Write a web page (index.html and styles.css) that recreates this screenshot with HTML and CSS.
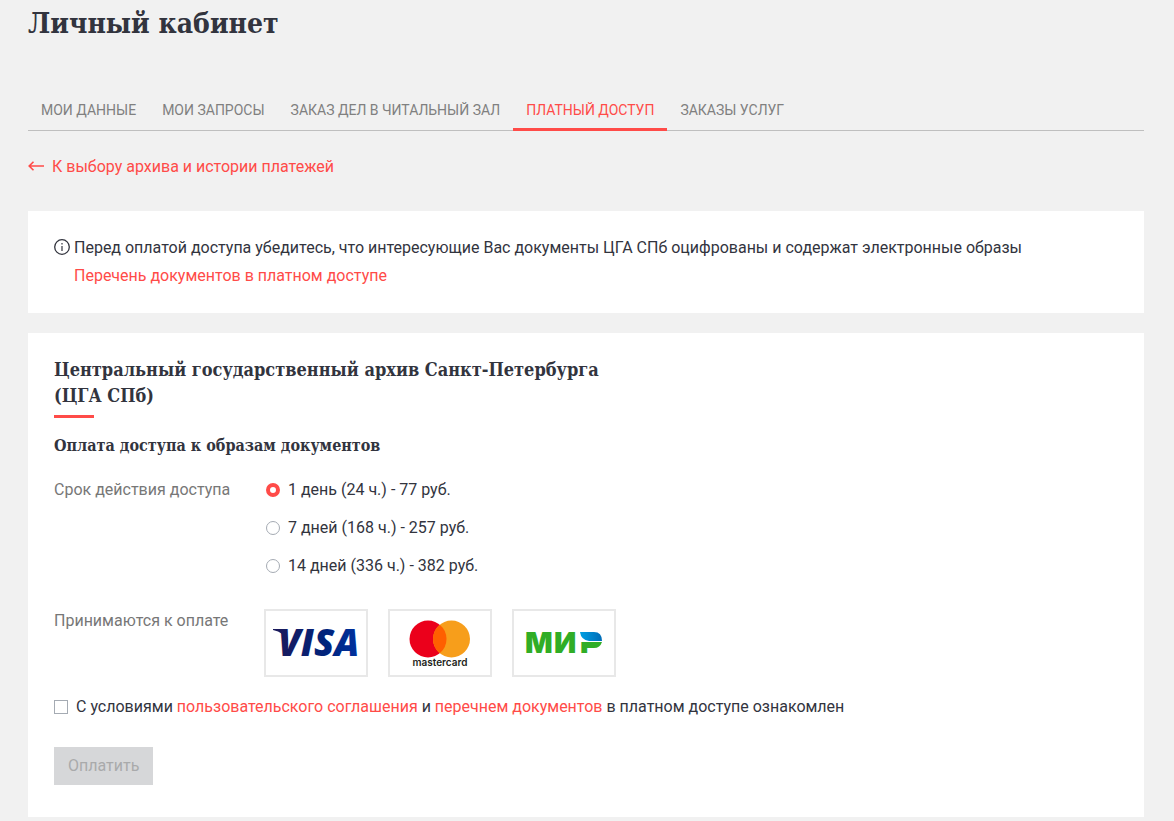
FILE: index.html
```html
<!DOCTYPE html>
<html lang="ru">
<head>
  <meta charset="UTF-8">
  <meta name="viewport" content="width=device-width, initial-scale=1.0">
  <title>Личный кабинет</title>
  <link rel="stylesheet" href="styles.css">
</head>
<body>

  <main class="page">
    <h1>Личный кабинет</h1>

    <nav class="tabs">
      <a href="#">Мои данные</a>
      <a href="#">Мои запросы</a>
      <a href="#">Заказ дел в читальный зал</a>
      <a href="#" class="active">Платный доступ</a>
      <a href="#">Заказы услуг</a>
    </nav>

    <a href="#" class="back-link">
      <svg width="16" height="12" viewBox="0 0 16 12" fill="none" stroke="currentColor" stroke-width="1.6" aria-hidden="true">
        <path d="M16 5H1M5.5 .7L1.2 5L5.5 9.3"/>
      </svg>
      К выбору архива и истории платежей
    </a>

    <section class="card notice">
      <svg class="info-icon" width="16" height="16" viewBox="0 0 16 16" fill="none" stroke="currentColor" aria-hidden="true">
        <circle cx="8" cy="8" r="7.3" stroke-width="1.3"/>
        <path d="M8 7V12M8 4V5.4" stroke-width="1.2"/>
      </svg>
      <div>
        <p>Перед оплатой доступа убедитесь, что интересующие Вас документы ЦГА СПб оцифрованы и содержат электронные образы</p>
        <a href="#">Перечень документов в платном доступе</a>
      </div>
    </section>

    <section class="card">
      <h2>Центральный государственный архив Санкт-Петербурга (ЦГА СПб)</h2>
      <h3>Оплата доступа к образам документов</h3>

      <form>
        <div class="form-row">
          <span class="form-label" id="periodLabel">Срок действия доступа</span>
          <div class="periods" role="radiogroup" aria-labelledby="periodLabel">
            <label><input type="radio" name="period" value="1" checked>1 день (24 ч.) - 77 руб.</label>
            <label><input type="radio" name="period" value="7">7 дней (168 ч.) - 257 руб.</label>
            <label><input type="radio" name="period" value="14">14 дней (336 ч.) - 382 руб.</label>
          </div>
        </div>

        <div class="form-row">
          <span class="form-label">Принимаются к оплате</span>
          <div class="payments">
            <div class="payment">
              <svg width="100" height="64" viewBox="0 0 100 64">
                <defs>
                  <linearGradient id="visaFill" x1="0" x2="1">
                    <stop offset="0" stop-color="#1a1a5c"/>
                    <stop offset="0.6" stop-color="#00247d"/>
                    <stop offset="1" stop-color="#0032a0"/>
                  </linearGradient>
                </defs>
                <path d="M7 18H17Q20 18 20.5 21L22 31Q18 21 7 19Z" fill="#1a1a5c"/>
                <text class="visa-text" x="12" y="45" fill="url(#visaFill)">VISA</text>
              </svg>
            </div>
            <div class="payment">
              <svg width="100" height="64" viewBox="0 0 100 64">
                <circle cx="38" cy="28" r="18.5" fill="#eb001b"/>
                <circle cx="61.5" cy="28" r="18.5" fill="#f79e1b"/>
                <path d="M49.75 13.7A18.5 18.5 0 0 1 49.75 42.3A18.5 18.5 0 0 1 49.75 13.7Z" fill="#ff5f00"/>
                <text class="mastercard-text" x="50" y="55" text-anchor="middle">mastercard</text>
              </svg>
            </div>
            <div class="payment">
              <svg width="100" height="64" viewBox="0 0 100 64">
                <defs>
                  <linearGradient id="mirFill" x1="0" x2="1">
                    <stop offset="0" stop-color="#009fe3"/>
                    <stop offset="1" stop-color="#006cb7"/>
                  </linearGradient>
                </defs>
                <text class="mir-text" x="11 40 66" y="42">МИР</text>
                <path d="M65 20H92V37H75V31H65Z" fill="#fff"/>
                <path d="M66 21H80Q88 21 88 30H75Q67 29 66 21Z" fill="url(#mirFill)"/>
                <path d="M68 31H88Q86 37 80 37H68Z" fill="#30ad26"/>
              </svg>
            </div>
          </div>
        </div>

        <div class="agreement">
          <input type="checkbox" id="agree">
          <label for="agree">С условиями <a href="#">пользовательского соглашения</a> и <a href="#">перечнем документов</a> в платном доступе ознакомлен</label>
        </div>

        <button type="submit" class="pay-button" disabled>Оплатить</button>
      </form>
    </section>
  </main>

</body>
</html>
```
FILE: styles.css
```css
* {
  box-sizing: border-box;
}

body {
  margin: 0;
  font-family: Roboto, sans-serif;
  font-size: 16px;
  line-height: 28px;
  color: #32343e;
  background-color: #f1f1f1;
}

h1, h2, h3 {
  font-family: "Roboto Slab", "DejaVu Serif Condensed", "DejaVu Serif", serif;
  font-weight: 600;
  margin: 0;
}

h1 {
  font-size: 28px;
  line-height: 48px;
}

p {
  margin: 0;
}

a {
  color: #ff4b48;
  text-decoration: none;
}

a:hover {
  text-decoration: underline;
}

.page {
  padding: 0 30px 4px 28px;
}

.tabs {
  display: flex;
  margin-top: 42px;
  border-bottom: 1px solid #bfbfbf;
}

.tabs a {
  padding: 6px 13px 4px;
  margin-bottom: -1px;
  border-bottom: 3px solid transparent;
  font-size: 14px;
  text-transform: uppercase;
  color: #808080;
}

.tabs a.active {
  color: #ff4b48;
  border-bottom-color: #ff4b48;
}

.back-link {
  display: inline-flex;
  align-items: center;
  gap: 8px;
  margin: 22px 0 30px;
}

.card {
  padding: 24px 26px 32px;
  background-color: #fff;
}

.notice {
  display: flex;
  gap: 4px;
  padding: 23px 26px;
  margin-bottom: 20px;
}

.info-icon {
  flex: none;
  margin-top: 5px;
}

h2 {
  max-width: 560px;
  font-size: 18px;
  line-height: 26px;
}

h2::after {
  content: "";
  display: block;
  width: 40px;
  height: 3px;
  margin-top: 6px;
  background-color: #ff4b48;
}

h3 {
  margin: 14px 0 16px;
  font-size: 16px;
}

.form-row {
  display: flex;
  margin-bottom: 16px;
}

.form-label {
  flex: none;
  width: 210px;
  color: #777;
}

.periods {
  display: flex;
  flex-direction: column;
  gap: 10px;
  margin-bottom: 11px;
}

.periods label {
  display: flex;
  align-items: center;
  gap: 8px;
  padding-left: 2px;
}

input[type="radio"], input[type="checkbox"] {
  appearance: none;
  flex: none;
  width: 14px;
  height: 14px;
  margin: 0;
  border: 1px solid #a5abb3;
  background-color: #fff;
}

input[type="radio"] {
  border-radius: 50%;
}

input[type="radio"]:checked {
  border: 4px solid #ff4b48;
}

input[type="checkbox"]:checked {
  background-color: #ff4b48;
}

.payments {
  display: flex;
  gap: 20px;
  padding-top: 2px;
}

.payment {
  border: 2px solid #e8e8e8;
}

.payment svg {
  display: block;
}

.visa-text {
  font: italic 800 37px "Open Sans", sans-serif;
}

.mastercard-text {
  font: 600 10px Inter, sans-serif;
  fill: #231f20;
}

.mir-text {
  font: 900 29px Inter, sans-serif;
  fill: #30ad26;
}

.agreement {
  display: flex;
  align-items: center;
  gap: 8px;
}

.pay-button {
  margin-top: 26px;
  padding: 5px 14px;
  border: none;
  font: inherit;
  color: #a9aaab;
  background-color: #d6d7d9;
}
```
